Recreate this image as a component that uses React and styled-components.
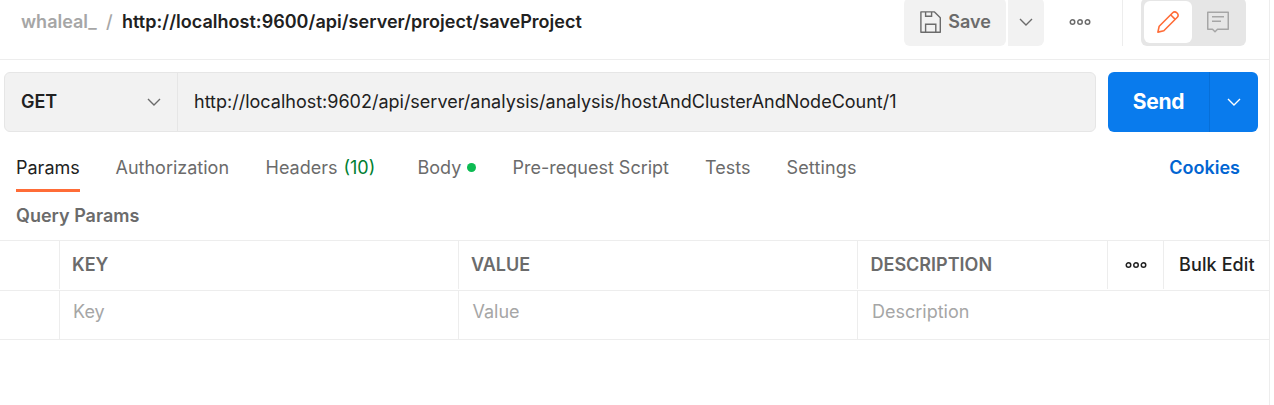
import React from "react";
import styled, { createGlobalStyle } from "styled-components";

const Global = createGlobalStyle`
  * { box-sizing: border-box; }
  body { margin: 0; background: #fff; overflow: hidden; }
`;

const Panel = styled.main`
  width: 1270px;
  height: 405px;
  border-right: 1px solid #ededed;
  display: flex;
  flex-direction: column;
  overflow: hidden;
  font-family: Inter, "Liberation Sans", sans-serif;
  font-size: 18px;
  line-height: 24px;
  color: #212121;
  white-space: nowrap;
`;

const Header = styled.header`
  height: 60px;
  flex: none;
  display: flex;
  align-items: flex-start;
  border-bottom: 1px solid #ededed;
`;

const Crumbs = styled.div`
  display: flex;
  flex: 1;
  padding: 10px 0 0 21px;
`;

const Crumb = styled.span`
  width: ${(p) => p.$w}px;
  color: ${(p) => (p.$muted ? "#a6a6a6" : "#212121")};
  font-weight: ${(p) => p.$weight || 500};
  letter-spacing: ${(p) => p.$ls || 0}px;
`;

const GreyButton = styled.button`
  width: ${(p) => p.$w}px;
  height: 48px;
  margin: -2px 2px 0 0;
  padding: 0;
  border: 0;
  border-radius: ${(p) => p.$radius};
  background: #f2f2f2;
  color: #6b6b6b;
  font: inherit;
  font-weight: 600;
  display: flex;
  align-items: center;
  justify-content: center;
  gap: 7px;
`;

const MoreButton = styled.div`
  width: 76px;
  height: 44px;
  display: flex;
  align-items: center;
  justify-content: center;
  padding-right: 8px;
  color: #6b6b6b;
`;

const Divider = styled.div`
  width: 1px;
  height: 46px;
  background: #ededed;
`;

const Toggle = styled.div`
  display: flex;
  width: 105px;
  height: 48px;
  margin: -2px 23px 0 18px;
  padding: 3px;
  border-radius: 6px;
  background: #e6e6e6;
`;

const ToggleItem = styled.div`
  width: ${(p) => p.$w}px;
  height: 42px;
  display: flex;
  align-items: center;
  justify-content: center;
  border-radius: 6px;
  background: ${(p) => (p.$active ? "#fff" : "transparent")};
  color: ${(p) => (p.$active ? "#ff6c37" : "#a6a6a6")};
`;

const RequestBar = styled.div`
  display: flex;
  gap: 12px;
  height: 60px;
  margin: 12px 11px 0 4px;
`;

const UrlBox = styled.div`
  width: 1092px;
  display: flex;
  border: 1px solid #e6e6e6;
  border-radius: 6px;
  background: #f2f2f2;
`;

const Method = styled.div`
  width: 173px;
  display: flex;
  align-items: center;
  justify-content: space-between;
  padding: 0 16px 0 16px;
  border-right: 1px solid #e6e6e6;
  font-weight: 600;
  letter-spacing: -0.1px;

  svg { color: #6b6b6b; }
`;

const Url = styled.div`
  display: flex;
  align-items: center;
  padding-left: 16px;
`;

const Send = styled.div`
  width: 150px;
  display: flex;
  border-radius: 6px;
  overflow: hidden;
  background: #097bed;
  color: #fff;
  font-size: 21px;
  font-weight: 700;
  letter-spacing: -0.3px;
`;

const SendPart = styled.div`
  width: ${(p) => p.$w}px;
  display: flex;
  align-items: center;
  justify-content: center;
  border-left: ${(p) => (p.$line ? "1px solid #066fd9" : "0")};
`;

const Tabs = styled.nav`
  display: flex;
  height: 60px;
  padding-left: 16px;
`;

const Tab = styled.div`
  height: 60px;
  margin-right: ${(p) => p.$gap}px;
  width: ${(p) => p.$w}px;
  padding-top: 24px;
  display: flex;
  letter-spacing: ${(p) => p.$ls || 0}px;
  color: ${(p) => (p.$active ? "#212121" : "#6b6b6b")};
  border-bottom: 3px solid ${(p) => (p.$active ? "#ff6c37" : "transparent")};
`;

const Count = styled.span`
  color: #007f31;
  margin-left: 6px;
`;

const Dot = styled.i`
  width: 9px;
  height: 9px;
  border-radius: 50%;
  background: #0cbb52;
  margin: 7px 0 0 6px;
`;

const Cookies = styled.a`
  margin-left: auto;
  padding: 24px 29px 0 0;
  color: #0265d2;
  font-weight: 600;
`;

const SectionTitle = styled.h2`
  margin: 0;
  padding: 12px 0 0 16px;
  height: 48px;
  font-size: 18px;
  font-weight: 600;
  line-height: 24px;
  color: #6b6b6b;
`;

const Row = styled.div`
  display: grid;
  grid-template-columns: ${(p) => p.$cols};
  height: ${(p) => p.$h}px;
  padding-bottom: ${(p) => p.$gap || 0}px;
  border-top: 1px solid #ededed;
`;

const Cell = styled.div`
  display: flex;
  align-items: flex-start;
  justify-content: ${(p) => (p.$center ? "center" : "flex-start")};
  padding: ${(p) => p.$pad || "0"};
  border-right: ${(p) => (p.$last ? "0" : "1px solid #ededed")};
  color: ${(p) => p.$color || "#6b6b6b"};
  font-weight: ${(p) => p.$weight || 600};
  letter-spacing: ${(p) => p.$ls || 0}px;
`;

const TableEnd = styled.div`
  height: 1px;
  background: #ededed;
`;

const Chevron = () => (
  <svg width="14" height="8" viewBox="0 0 14 8" fill="none" stroke="currentColor" strokeWidth="1.4">
    <path d="M1 1l6 6 6-6" />
  </svg>
);

const Dots = () => (
  <svg width="22" height="8" viewBox="0 0 22 8" fill="none" stroke="currentColor" strokeWidth="1.5">
    <circle cx="3.5" cy="4" r="2.25" />
    <circle cx="11" cy="4" r="2.25" />
    <circle cx="18.5" cy="4" r="2.25" />
  </svg>
);

const SaveIcon = () => (
  <svg width="22" height="22" viewBox="0 0 22 22" fill="none" stroke="currentColor" strokeWidth="1.4">
    <path d="M1.9.9h13.6l5.8 5.8v14.6H1.9z" strokeLinejoin="round" />
    <path d="M6.6.9v4.4h6V.9M6.6 21.2v-7.9h10.2v7.9" />
  </svg>
);

const Pencil = () => (
  <svg width="22" height="22" viewBox="0 0 22 22" fill="none" stroke="currentColor" strokeWidth="1.6" strokeLinejoin="round">
    <path d="M.9 21.1l1.3-5.9L15.7 1.7a2.8 2.8 0 0 1 4 0l.6.6a2.8 2.8 0 0 1 0 4L6.8 19.8z" />
    <path d="M13.6 3.8l4.6 4.6" />
  </svg>
);

const Comment = () => (
  <svg width="22" height="22" viewBox="0 0 22 22" fill="none" stroke="currentColor" strokeWidth="1.5">
    <path d="M.75 1.25h20.5v17H10.5L8 20.7l-2.5-2.45H.75z" strokeLinejoin="round" />
    <path d="M5 5.75h12M5 10.25h9" />
  </svg>
);

export default function App() {
  return (
    <Panel>
      <Global />
      <Header>
        <Crumbs>
          <Crumb $muted $w={85} $weight={600}>whaleal_</Crumb>
          <Crumb $muted $w={16}>/</Crumb>
          <Crumb $weight={600} $ls={0.03}>http://localhost:9600/api/server/project/saveProject</Crumb>
        </Crumbs>
        <GreyButton $w={102} $radius="6px"><SaveIcon />Save</GreyButton>
        <GreyButton $w={36} $radius="0 6px 6px 0"><Chevron /></GreyButton>
        <MoreButton><Dots /></MoreButton>
        <Divider />
        <Toggle>
          <ToggleItem $active $w={48}><Pencil /></ToggleItem>
          <ToggleItem $w={51}><Comment /></ToggleItem>
        </Toggle>
      </Header>
      <RequestBar>
        <UrlBox>
          <Method>GET<Chevron /></Method>
          <Url>http://localhost:9602/api/server/analysis/analysis/hostAndClusterAndNodeCount/1</Url>
        </UrlBox>
        <Send>
          <SendPart $w={101}>Send</SendPart>
          <SendPart $w={49} $line><Chevron /></SendPart>
        </Send>
      </RequestBar>
      <Tabs>
        <Tab $active $w={64} $gap={35.5}>Params</Tab>
        <Tab $w={114} $gap={36}>Authorization</Tab>
        <Tab $w={112} $gap={40}>Headers<Count>(10)</Count></Tab>
        <Tab $w={60} $gap={35}>Body<Dot /></Tab>
        <Tab $w={157} $gap={35.5}>Pre-request Script</Tab>
        <Tab $w={45} $gap={36.5}>Tests</Tab>
        <Tab $w={70} $gap={0} $ls={0.15}>Settings</Tab>
        <Cookies>Cookies</Cookies>
      </Tabs>
      <SectionTitle>Query Params</SectionTitle>
      <Row $cols="60px 399px 399px 250px 56px 1fr" $h={50} $gap={1}>
        <Cell />
        <Cell $pad="12px 0 0 12px">KEY</Cell>
        <Cell $pad="12px 0 0 12px">VALUE</Cell>
        <Cell $pad="12px 0 0 12.5px">DESCRIPTION</Cell>
        <Cell $center $pad="20px 0 0 0" $color="#212121"><Dots /></Cell>
        <Cell $last $pad="12px 0 0 15px" $color="#212121" $weight={500} $ls={0.12}>Bulk Edit</Cell>
      </Row>
      <Row $cols="60px 399px 399px 1fr" $h={49}>
        <Cell />
        <Cell $pad="9px 0 0 13px" $color="#a6a6a6" $weight={400}>Key</Cell>
        <Cell $pad="9px 0 0 13.5px" $color="#a6a6a6" $weight={400}>Value</Cell>
        <Cell $last $pad="9px 0 0 14px" $color="#a6a6a6" $weight={400}>Description</Cell>
      </Row>
      <TableEnd />
    </Panel>
  );
}
